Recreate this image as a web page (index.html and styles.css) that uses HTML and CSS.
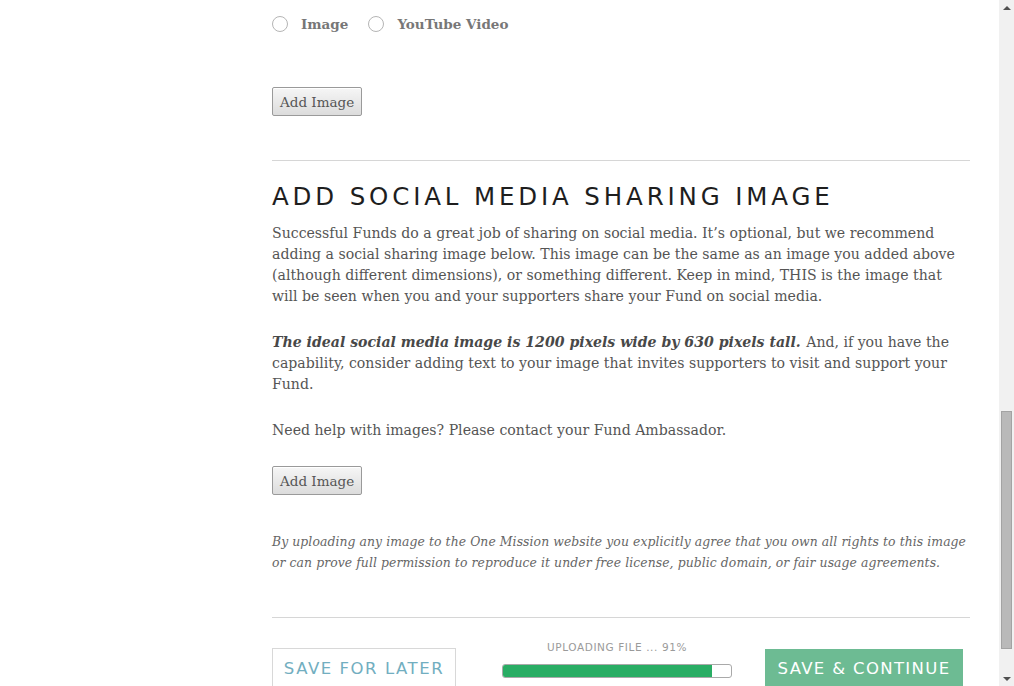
FILE: index.html
```html
<!DOCTYPE html>
<html lang="en">
<head>
<meta charset="utf-8">
<title>Fund Images</title>
<link rel="stylesheet" href="styles.css">
</head>
<body>
<div class="frame">
  <div class="page">
    <aside class="sidebar"></aside>
    <main class="content">
      <div class="media-choice">
        <label class="radio"><span class="radio-dot"></span>Image</label>
        <label class="radio"><span class="radio-dot"></span>YouTube Video</label>
      </div>
      <button class="wp-btn first-btn">Add Image</button>
      <hr class="rule rule-top">
      <section class="social">
        <h2 class="section-title">ADD SOCIAL MEDIA SHARING IMAGE</h2>
        <p class="copy">Successful Funds do a great job of sharing on social media. It’s optional, but we recommend adding a social sharing image below. This image can be the same as an image you added above (although different dimensions), or something different. Keep in mind, THIS is the image that will be seen when you and your supporters share your Fund on social media.</p>
        <p class="copy"><strong><em>The ideal social media image is 1200 pixels wide by 630 pixels tall.</em></strong> And, if you have the capability, consider adding text to your image that invites supporters to visit and support your Fund.</p>
        <p class="copy">Need help with images? Please contact your Fund Ambassador.</p>
        <button class="wp-btn">Add Image</button>
        <p class="disclaimer">By uploading any image to the One Mission website you explicitly agree that you own all rights to this image or can prove full permission to reproduce it under free license, public domain, or fair usage agreements.</p>
      </section>
      <hr class="rule rule-bottom">
      <div class="actions">
        <button class="btn-later">SAVE FOR LATER</button>
        <div class="upload">
          <div class="upload-label">UPLOADING FILE ... 91%</div>
          <div class="progress"><div class="progress-fill" style="width: 91.5%"></div></div>
        </div>
        <button class="btn-continue">SAVE &amp; CONTINUE</button>
      </div>
    </main>
  </div>
  <div class="scrollbar">
    <div class="sb-arrow sb-up"></div>
    <div class="sb-track">
      <div class="sb-thumb"></div>
    </div>
    <div class="sb-arrow sb-down"></div>
  </div>
</div>
</body>
</html>
```

FILE: styles.css
```css
html, body {
  margin: 0;
  padding: 0;
  background: #fff;
}

body {
  font-family: "DejaVu Serif", "Liberation Serif", serif;
  color: #555;
}

.frame {
  display: grid;
  grid-template-columns: 999px 15px;
  height: 686px;
  overflow: hidden;
}

.page {
  display: grid;
  grid-template-columns: 272px 698px;
  align-content: start;
  overflow: hidden;
}

.media-choice {
  display: flex;
  align-items: center;
  height: 48px;
  gap: 20px;
}

.radio {
  display: flex;
  align-items: center;
  gap: 13px;
  font-weight: bold;
  font-size: 13.5px;
  color: #777;
}

.radio-dot {
  width: 14px;
  height: 14px;
  border: 1px solid #b5b5b5;
  border-radius: 50%;
  background: #fff;
}

.wp-btn {
  display: block;
  height: 29px;
  padding: 0 7px;
  font-family: "DejaVu Serif", serif;
  font-size: 13.5px;
  color: #555;
  background: linear-gradient(#f6f6f6, #dcdcdc);
  border: 1px solid #9a9a9a;
  border-radius: 2px;
  box-shadow: inset 0 1px 0 #fff;
}

.first-btn {
  margin-top: 39px;
}

.rule {
  margin: 0;
  border: 0;
  border-top: 1px solid #d6d6d6;
}

.rule-top {
  margin-top: 44px;
}

.section-title {
  margin: 20px 0 10px;
  font-family: "DejaVu Sans", sans-serif;
  font-weight: normal;
  font-size: 24.5px;
  line-height: 32px;
  letter-spacing: 3.85px;
  color: #1e1e1e;
}

.copy {
  margin: 0 0 25px;
  font-size: 14.1px;
  line-height: 21px;
}

.copy strong {
  color: #484848;
  margin-right: 1px;
}

.disclaimer {
  margin: 36px 0 0;
  font-size: 12.4px;
  line-height: 21px;
  font-style: italic;
  letter-spacing: 0.08px;
  color: #666;
}

.rule-bottom {
  margin-top: 44px;
}

.actions {
  display: flex;
  align-items: flex-start;
  height: 80px;
}

.btn-later {
  margin-top: 30px;
  width: 184px;
  height: 42px;
  padding: 0 0 2px;
  background: #fff;
  border: 1px solid #d8d8d8;
  font-family: "DejaVu Sans", sans-serif;
  font-size: 16.5px;
  letter-spacing: 1.55px;
  color: #72aec0;
}

.upload {
  margin: 23px 0 0 46px;
  width: 230px;
  display: flex;
  flex-direction: column;
  align-items: center;
  gap: 11px;
}

.upload-label {
  font-family: "DejaVu Sans", sans-serif;
  font-size: 10.5px;
  letter-spacing: 0.6px;
  line-height: 12px;
  color: #9a9a9a;
}

.progress {
  width: 228px;
  height: 12px;
  border: 1px solid #a9a9a9;
  border-radius: 3px;
  background: #fff;
  overflow: hidden;
}

.progress-fill {
  height: 100%;
  background: #29ad64;
}

.btn-continue {
  margin: 31px 0 0 33px;
  width: 198px;
  height: 42px;
  padding: 0 0 4px;
  background: #6dbb93;
  border: 0;
  font-family: "DejaVu Sans", sans-serif;
  font-size: 16.5px;
  letter-spacing: 1.35px;
  color: #fff;
}

/* scrollbar (page is scrolled to the bottom) */
.scrollbar {
  display: flex;
  flex-direction: column;
  background: #f1f1f1;
}

.sb-arrow {
  height: 15px;
  display: flex;
  justify-content: center;
  align-items: center;
}

.sb-arrow::before {
  content: "";
  width: 0;
  height: 0;
  border-left: 4px solid transparent;
  border-right: 4px solid transparent;
}

.sb-up::before {
  border-bottom: 4px solid #505050;
}

.sb-down::before {
  border-top: 4px solid #505050;
}

.sb-track {
  flex: 1;
  display: flex;
  flex-direction: column;
  justify-content: flex-end;
  padding: 0 2px 22px;
}

.sb-thumb {
  height: 238px;
  background: #b9b9b9;
  border: 1px solid #a3a3a3;
  box-sizing: border-box;
}
```
